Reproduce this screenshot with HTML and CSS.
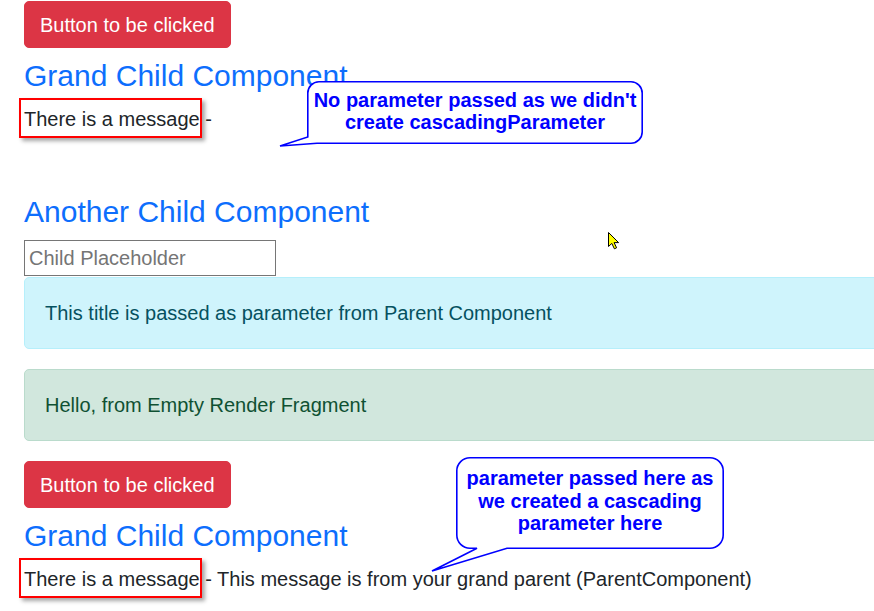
FILE: index.html
```html
<!DOCTYPE html>
<html lang="en">
<head>
  <meta charset="UTF-8" />
  <meta name="viewport" content="width=device-width, initial-scale=1.0"/>
  <title>Cascading Parameter Demo</title>
  <link rel="stylesheet" href="styles.css">
</head>
<body>
  <div class="page">

    <!-- Parent component output -->
    <section class="parent">
      <button class="btn btn-danger">Button to be clicked</button>
      <h4 class="title">Grand Child Component</h4>
      <p class="message"><span class="marked">There is a message</span> -</p>

      <h4 class="title child-title">Another Child Component</h4>
      <input type="text" class="child-input" placeholder="Child Placeholder" />
      <div class="alert alert-info">This title is passed as parameter from Parent Component</div>
      <div class="alert alert-success">Hello, from Empty Render Fragment</div>

      <button class="btn btn-danger">Button to be clicked</button>
      <h4 class="title">Grand Child Component</h4>
      <p class="message"><span class="marked">There is a message</span> - This message is from your grand parent (ParentComponent)</p>
    </section>

    <!-- Notes drawn over the screenshot -->
    <div class="callout callout-top">
      <svg class="callout-shape" width="336" height="63" viewBox="0 0 336 63">
        <path d="M12 0.8 H324 A11.2 11.2 0 0 1 335.2 12 V51 A11.2 11.2 0 0 1 324 62.2 H10 L-27 65 L0.8 56 V12 A11.2 11.2 0 0 1 12 0.8 Z" />
      </svg>
      <div class="callout-text">No parameter passed as we didn't<br>create cascadingParameter</div>
    </div>

    <div class="callout callout-bottom">
      <svg class="callout-shape" width="268" height="92" viewBox="0 0 268 92">
        <path d="M14 0.8 H254 A13.2 13.2 0 0 1 267.2 14 V78 A13.2 13.2 0 0 1 254 91.2 H51 L-24 114 L21 91.2 H14 A13.2 13.2 0 0 1 0.8 78 V14 A13.2 13.2 0 0 1 14 0.8 Z" />
      </svg>
      <div class="callout-text">parameter passed here as<br>we created a cascading<br>parameter here</div>
    </div>

    <svg class="cursor" width="13" height="18" viewBox="0 0 13 18">
      <path d="M0.5 0.5 L0.5 14.5 L3.8 11.4 L6.4 16.8 L8.6 15.8 L6.1 10.6 L10.6 10.6 Z" />
    </svg>
  </div>
</body>
</html>
```

FILE: styles.css
```css
html, body {
  margin: 0;
  overflow: hidden;
}

body {
  font-family: "Liberation Sans", Arial, sans-serif;
  font-size: 20px;
  line-height: 30px;
  color: #212529;
  background: #fff;
}

.page {
  position: relative;
  height: 611px;
  padding: 1px 0 0 24px;
  overflow: hidden;
}

.btn {
  display: block;
  margin: 0 0 10px;
  padding: 7.5px 15px;
  font-family: inherit;
  font-size: 20px;
  line-height: 30px;
  border: 1px solid transparent;
  border-radius: 5px;
  cursor: pointer;
}

.btn-danger {
  color: #fff;
  background-color: #dc3545;
  border-color: #dc3545;
}

.title {
  margin: 0 0 10px;
  font-size: 30px;
  font-weight: 500;
  line-height: 1.2;
  color: #0d6efd;
}

.child-title {
  margin-top: 60px;
}

.message {
  margin: 0 0 20px;
}

.marked {
  position: relative;
}

.marked::after {
  content: "";
  position: absolute;
  top: -10px;
  bottom: -8px;
  left: -5px;
  right: -2px;
  border: 2px solid #f00;
  box-shadow: 3px 3px 4px rgba(0, 0, 0, 0.35);
}

.child-input {
  display: block;
  box-sizing: border-box;
  width: 252px;
  height: 36px;
  margin: 0 0 1px;
  padding: 0 4px;
  font-family: inherit;
  font-size: 20px;
  border: 1px solid #767676;
  border-radius: 0;
}

.child-input::placeholder {
  color: #757575;
}

.alert {
  margin: 0 -30px 20px 0;
  padding: 20px;
  border: 1px solid transparent;
  border-radius: 5px;
}

.alert-info {
  color: #055160;
  background-color: #cff4fc;
  border-color: #b6effb;
}

.alert-success {
  color: #0f5132;
  background-color: #d1e7dd;
  border-color: #badbcc;
}

.callout {
  position: absolute;
  box-sizing: border-box;
  text-align: center;
  font-weight: bold;
  color: #00f;
}

.callout-top {
  left: 307px;
  top: 81px;
  width: 336px;
  height: 63px;
  padding-top: 8px;
  line-height: 22px;
}

.callout-bottom {
  left: 456px;
  top: 457px;
  width: 268px;
  height: 92px;
  padding-top: 10px;
  line-height: 22.5px;
}

.callout-shape {
  position: absolute;
  left: 0;
  top: 0;
  overflow: visible;
}

.callout-shape path {
  fill: #fff;
  stroke: #00f;
  stroke-width: 1.6;
}

.callout-text {
  position: relative;
}

.cursor {
  position: absolute;
  left: 608px;
  top: 232px;
}

.cursor path {
  fill: #ff0;
  stroke: #000;
  stroke-width: 1;
}
```
